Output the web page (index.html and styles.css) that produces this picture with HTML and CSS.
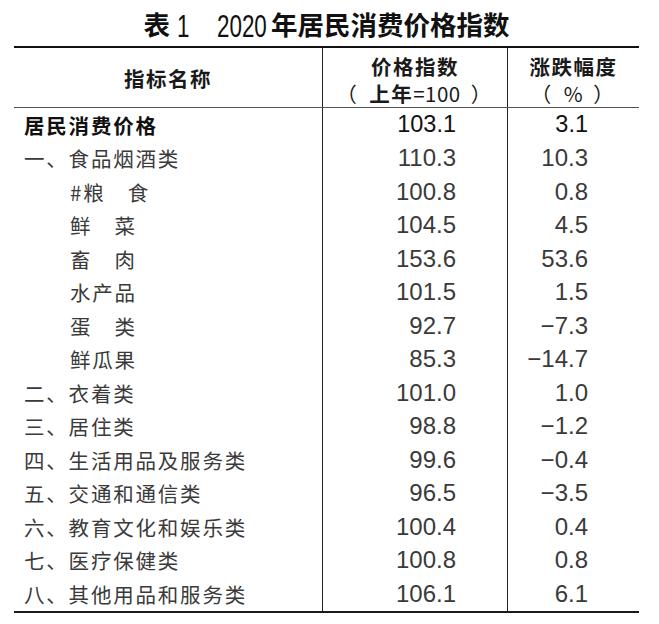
FILE: index.html
```html
<!DOCTYPE html>
<html lang="zh-CN">
<head>
<meta charset="utf-8">
<title>表1 2020年居民消费价格指数</title>
<link rel="stylesheet" href="styles.css">
</head>
<body>
<div class="page">
  <h1 class="title"><span class="t-cjk">表</span><span class="t-num t-one"><span class="t-num-inner">1</span></span><span class="t-num t-year"><span class="t-num-inner">2020</span></span><span class="t-cjk t-rest">年居民消费价格指数</span></h1>
  <div class="table">
    <div class="head">
      <div class="hcell hname">指标名称</div>
      <div class="hcell hnum"><div class="hline">价格指数</div><div class="hline"><span class="po">（</span>上年<span class="light">=100</span><span class="pc">）</span></div></div>
      <div class="hcell hnum"><div class="hline">涨跌幅度</div><div class="hline"><span class="po">（</span><span class="light">%</span><span class="pc">）</span></div></div>
    </div>
    <div class="row total"><div class="name">居民消费价格</div><div class="num">103.1</div><div class="num">3.1</div></div>
    <div class="row"><div class="name">一、食品烟酒类</div><div class="num">110.3</div><div class="num">10.3</div></div>
    <div class="row"><div class="name sub">#粮　食</div><div class="num">100.8</div><div class="num">0.8</div></div>
    <div class="row"><div class="name sub">鲜　菜</div><div class="num">104.5</div><div class="num">4.5</div></div>
    <div class="row"><div class="name sub">畜　肉</div><div class="num">153.6</div><div class="num">53.6</div></div>
    <div class="row"><div class="name sub">水产品</div><div class="num">101.5</div><div class="num">1.5</div></div>
    <div class="row"><div class="name sub">蛋　类</div><div class="num">92.7</div><div class="num">−7.3</div></div>
    <div class="row"><div class="name sub">鲜瓜果</div><div class="num">85.3</div><div class="num">−14.7</div></div>
    <div class="row"><div class="name">二、衣着类</div><div class="num">101.0</div><div class="num">1.0</div></div>
    <div class="row"><div class="name">三、居住类</div><div class="num">98.8</div><div class="num">−1.2</div></div>
    <div class="row"><div class="name">四、生活用品及服务类</div><div class="num">99.6</div><div class="num">−0.4</div></div>
    <div class="row"><div class="name">五、交通和通信类</div><div class="num">96.5</div><div class="num">−3.5</div></div>
    <div class="row"><div class="name">六、教育文化和娱乐类</div><div class="num">100.4</div><div class="num">0.4</div></div>
    <div class="row"><div class="name">七、医疗保健类</div><div class="num">100.8</div><div class="num">0.8</div></div>
    <div class="row"><div class="name">八、其他用品和服务类</div><div class="num">106.1</div><div class="num">6.1</div></div>
  </div>
</div>
</body>
</html>
```
FILE: styles.css
```css
html, body {
  margin: 0;
  padding: 0;
  background: #ffffff;
}

body {
  font-family: "Noto Sans CJK SC", "Noto Sans", sans-serif;
  color: #333333;
  text-spacing-trim: space-all;
}

.page {
  width: 659px;
}

.title {
  margin: 0 0 0 14px;
  width: 625px;
  height: 46px;
  box-sizing: border-box;
  padding-top: 3px;
  line-height: 42px;
  font-size: 26.5px;
  font-weight: 700;
  color: #111111;
  text-align: center;
  white-space: nowrap;
}

.t-num {
  display: inline-block;
  font-family: "Liberation Sans", sans-serif;
  font-weight: 400;
  font-size: 32px;
  vertical-align: -2px;
  overflow: visible;
  white-space: nowrap;
}

.t-num-inner {
  display: inline-block;
  transform: scaleX(0.7);
  transform-origin: left center;
}

.t-one {
  width: 10px;
  margin-left: 7px;
}

.t-year {
  width: 50px;
  margin-left: 30px;
}

.t-rest {
  margin-left: 4px;
}

.table {
  margin-left: 14px;
  width: 625px;
  border-top: 2px solid #111111;
  border-bottom: 2px solid #1a1a1a;
}

.head {
  display: grid;
  grid-template-columns: 308px 185px 132px;
  height: 60px;
  border-bottom: 1px solid #555555;
  box-sizing: border-box;
}

.hcell {
  font-weight: 700;
  font-size: 20.5px;
  letter-spacing: 1.5px;
  color: #1a1a1a;
  box-sizing: border-box;
}

.hname {
  display: flex;
  align-items: center;
  justify-content: center;
}

.hnum {
  border-left: 1px solid #222222;
  padding-top: 5px;
  text-align: center;
}

.hline {
  height: 27px;
  line-height: 27px;
  white-space: nowrap;
}

.po,
.pc {
  display: inline-block;
  width: 22px;
  font-weight: 400;
  letter-spacing: 0;
  text-align: left;
  white-space: nowrap;
}

.po {
  text-indent: -11px;
}

.pc {
  text-indent: 10px;
}

.light {
  font-weight: 400;
  letter-spacing: 0.5px;
}

.row {
  display: grid;
  grid-template-columns: 308px 185px 132px;
  height: 33.5px;
}

.name {
  display: flex;
  align-items: center;
  padding-left: 10px;
  font-size: 20.5px;
  letter-spacing: 1.8px;
  color: #3a3a3a;
  white-space: nowrap;
}

.name.sub {
  padding-left: 56px;
}

.num {
  display: flex;
  align-items: center;
  justify-content: flex-end;
  padding-right: 51px;
  border-left: 1px solid #222222;
  font-family: "Liberation Sans", sans-serif;
  font-size: 24px;
  color: #3a3a3a;
  box-sizing: border-box;
}

.total .name {
  font-weight: 700;
  color: #111111;
}

.total .num {
  color: #111111;
  font-size: 23.5px;
}
```
